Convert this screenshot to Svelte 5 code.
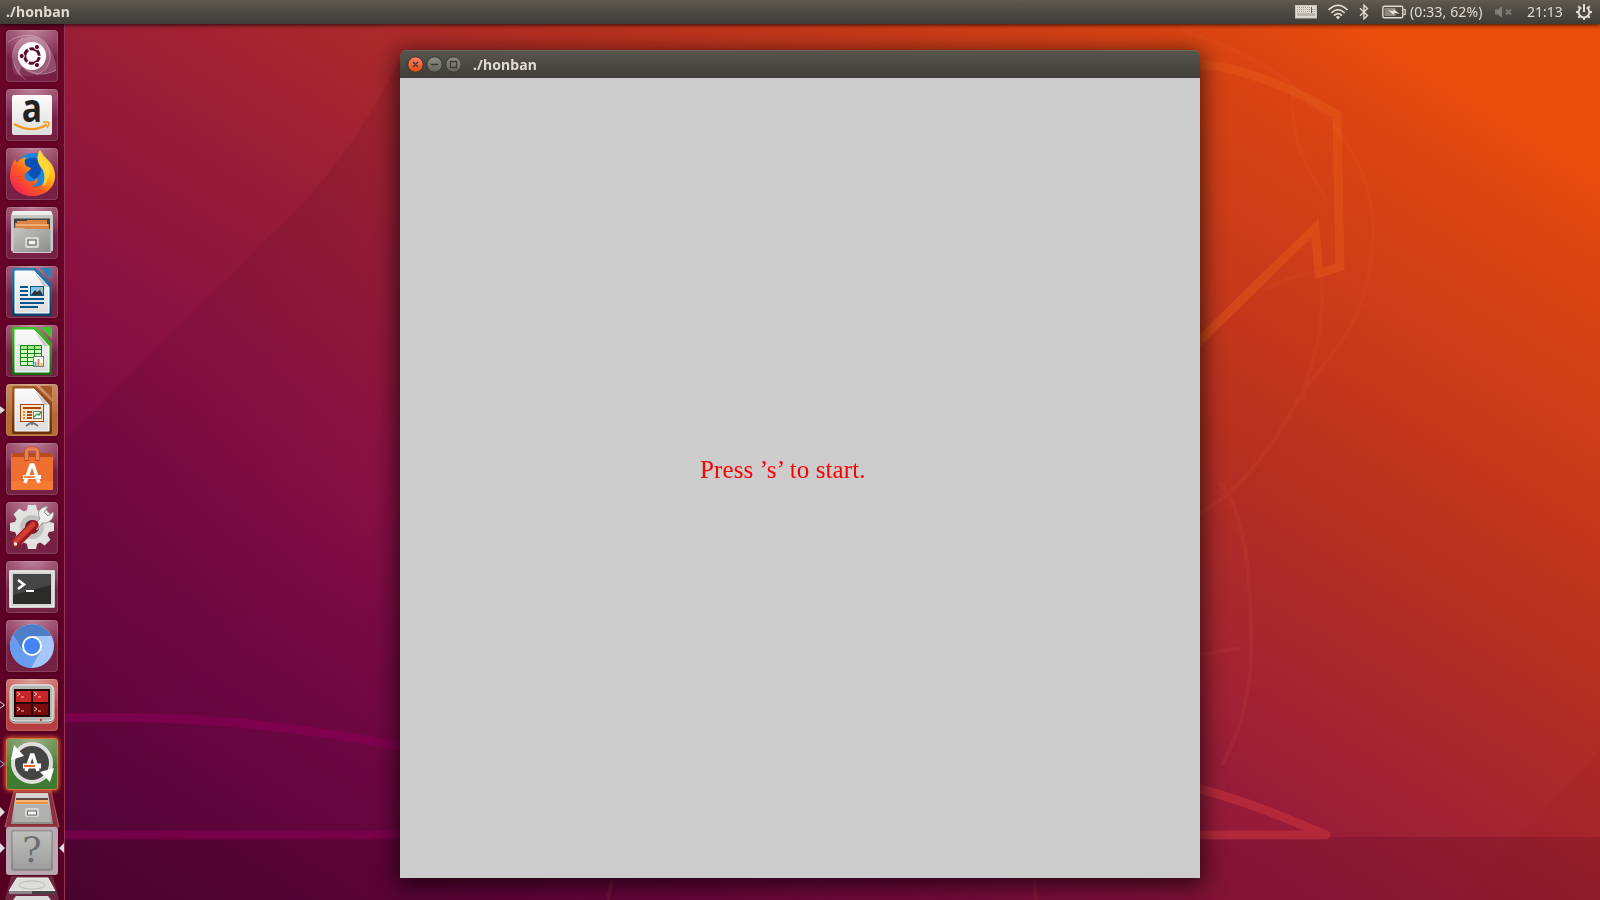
<script>
  const apps = [
    { id: 'dash' },
    { id: 'amazon' },
    { id: 'firefox' },
    { id: 'files' },
    { id: 'writer' },
    { id: 'calc' },
    { id: 'impress', tint: 'orange', arrow: 'solid' },
    { id: 'software' },
    { id: 'settings' },
    { id: 'terminal' },
    { id: 'chromium' },
    { id: 'terminator', tint: 'red', arrow: 'outline' },
    { id: 'updater', tint: 'green', arrow: 'blue' }
  ];
  const doc = {
    writer: ['#2f80b4', '#003f6b'],
    calc: ['#43c02f', '#126e0c'],
    impress: ['#a55a26', '#6d2c05']
  };
</script>

<div class="desktop">
  <svg class="wallpaper" width="1600" height="900" viewBox="0 0 1600 900">
    <defs>
      <linearGradient id="wall" gradientUnits="userSpaceOnUse" x1="-383" y1="613" x2="383" y2="-613">
        <stop offset="0" stop-color="#4b0532" />
        <stop offset=".053" stop-color="#550538" />
        <stop offset=".173" stop-color="#69063f" />
        <stop offset=".27" stop-color="#780a43" />
        <stop offset=".34" stop-color="#850f42" />
        <stop offset=".5" stop-color="#991d38" />
        <stop offset=".6" stop-color="#a8282d" />
        <stop offset=".69" stop-color="#b63020" />
        <stop offset=".83" stop-color="#cd3d18" />
        <stop offset=".93" stop-color="#dc4512" />
        <stop offset=".99" stop-color="#e94e0c" />
      </linearGradient>
      <linearGradient id="fold" gradientUnits="userSpaceOnUse" x1="200" y1="300" x2="400" y2="500">
        <stop offset="0" stop-color="#300018" stop-opacity=".09" />
        <stop offset="1" stop-color="#300018" stop-opacity="0" />
      </linearGradient>
      <filter id="soft"><feGaussianBlur stdDeviation=".7" /></filter>
    </defs>
    <rect width="1600" height="900" fill="url(#wall)" />
    <path d="M60 445L270 235Q340 175 400 60H1000V900H60Z" fill="url(#fold)" />
    <path d="M0 837H1600V900H0Z" fill="#3a0018" opacity=".17" />
    <path d="M1460 900L1600 750V900Z" fill="#8a0c10" opacity=".06" />
    <g fill="none" stroke-linejoin="round" filter="url(#soft)">
      <path d="M60 718C190 714 300 726 402 747" stroke="#860555" stroke-width="9" opacity=".7" />
      <path d="M60 835H402" stroke="#80054f" stroke-width="9" opacity=".7" />
      <path d="M1190 64C1240 64 1300 92 1337 115L1340 267L1319 273L1315 228L1190 350" stroke="#e66020" stroke-width="9" stroke-linejoin="miter" opacity=".42" />
      <path d="M1190 787C1230 795 1280 815 1326 835H1190" stroke="#c12e3c" stroke-width="9" opacity=".65" />
      <g stroke="#ed6440" stroke-width="4" opacity=".1">
        <path d="M1180 30C1300 65 1373 145 1373 230C1373 330 1320 360 1295 405C1260 470 1225 500 1190 520" />
        <path d="M1292 85C1290 150 1310 170 1326 200M1322 275C1325 340 1308 370 1302 400M1265 290Q1290 275 1320 272" />
        <path d="M1220 482C1250 520 1252 600 1251 660C1248 710 1235 740 1222 765M1200 655L1240 648" />
        <path d="M612 880L608 900M1034 880L1036 900" />
      </g>
    </g>
  </svg>

  <header class="panel">
    <span class="panel-title">./honban</span>
    <div class="indicators">
      <svg class="keyboard" width="22" height="14" viewBox="0 0 22 14">
        <rect x=".5" y=".5" width="21" height="12.5" fill="#dedbd3" stroke="#c7c4bd" />
        <path d="M2 2.5h13M2 4.5h13M2 6.5h13M17 6.5h4M17 4.5h3" stroke="#a09e97" stroke-dasharray="1 1" />
        <path d="M2 9.5h18" stroke="#bab7af" stroke-width="3" /><path d="M16.5 2v6" stroke="#5d5b55" />
      </svg>
      <svg class="wifi" width="22" height="16" viewBox="0 0 22 16" fill="none" stroke="#dfdbd2" stroke-width="1.7">
        <path d="M1.5 6Q11-3.2 20.5 6M4.3 9Q11 2.2 17.7 9M7 11.7Q11 7.5 15 11.7" /><path d="M8.8 13Q11 11 13.2 13L11 15.5Z" fill="#dfdbd2" stroke="none" />
      </svg>
      <svg class="bluetooth" width="10" height="16" viewBox="0 0 10 16" fill="none" stroke="#dfdbd2" stroke-width="1.4"><path d="M1 4.2L8.500 11.400L5 14.800V1.200L8.500 4.600L1 11.800" /></svg>
      <svg class="battery" width="24" height="14" viewBox="0 0 24 14">
        <rect x=".8" y="1.3" width="20" height="11.400" rx="1.400" fill="none" stroke="#dfdbd2" stroke-width="1.400" />
        <rect x="2.500" y="3" width="11" height="8" fill="#8c8981" /><path d="M21.500 4.500h1.700v5h-1.700" fill="none" stroke="#dfdbd2" stroke-width="1.200" />
        <path d="M6 5L11.500 6.600V4L17.500 9L12 7.700V10Z" fill="#eeeae0" />
      </svg>
      <span class="charge">(0:33, 62%)</span>
      <svg class="sound" width="18" height="14" viewBox="0 0 18 14"><path d="M0 4.500h3L7 1v12L3 9.500H0Z" fill="#817e76" /><path d="M11 4.500l5 5m0-5l-5 5" stroke="#817e76" stroke-width="1.800" /></svg>
      <span class="clock">21:13</span>
      <svg class="gear" width="18" height="18" viewBox="-9 -9 18 18" fill="none" stroke="#dfdbd2">
        <path d="M-2.800-4.600A5.400 5.400 0 1 0 2.800-4.600" stroke-width="2" /><path d="M0-8V0" stroke-width="2" />
        <path d="M-5.800 0H-8M5.800 0H8M0 5.800V8M-4.100 4.100L-5.800 5.800M4.100 4.100L5.800 5.800M-4.100-4.100L-5.800-5.800M4.100-4.100L5.800-5.800" stroke-width="2" />
      </svg>
    </div>
  </header>

  <nav class="launcher">
    {#each apps as app}
      <div class="tile {app.tint ?? ''}">
        {#if app.arrow}
          <svg class="pip" width="6" height="10" viewBox="0 0 6 10"><path d="M-1 1L4.500 5L-1 9Z" fill={app.arrow === 'solid' ? '#ddd' : 'none'} stroke={app.arrow === 'blue' ? '#7fb9e8' : '#ddd'} /></svg>
        {/if}
        <svg class="icon" width="52" height="52" viewBox="0 0 52 52">
          <defs>
            <linearGradient id={`paper-${app.id}`} x2="0" y2="1"><stop stop-color="#fbfbfb" /><stop offset="1" stop-color="#dedede" /></linearGradient>
            <linearGradient id={`steel-${app.id}`} x2="1" y2="1"><stop stop-color="#c4c4c2" /><stop offset="1" stop-color="#8b8b89" /></linearGradient>
          </defs>
          {#if app.id === 'dash'}
            <path d="M2 16Q24-4 40 12Q49 25 41 39Q28 50 8 44Q1 18 15 8L2 16Z" fill="#fff" opacity=".1" />
            <path d="M8 30C5 15 15 6 26 7C40 8 48 23 50 35V41C38 46 22 46 16 37C12 42 14 46 19 50C11 44 7 38 8 30Z" fill="#fff" opacity=".2" />
            <g fill="none" stroke="#fff" opacity=".3"><path d="M2 12C24-3 46 9 44 29C42 37 38 42 30 45" /><path d="M20 50C3 37 3 16 17 8M50 40C34 49 16 42 12 26" /></g>
            <circle cx="26" cy="26" r="14" fill="#fff" />
            <circle cx="26" cy="26" r="7.300" fill="none" stroke="#5c0c2c" stroke-width="3" stroke-dasharray="13.700 1.600" stroke-dashoffset="-1" />
            <g fill="#5c0c2c" stroke="#fff"><circle cx="15.700" cy="26" r="2.600" /><circle cx="31" cy="17" r="2.600" /><circle cx="31" cy="35" r="2.600" /></g>
          {:else if app.id === 'amazon'}
            <rect x="6" y="6" width="40" height="40" rx="2" fill={`url(#paper-${app.id})`} />
            <g transform="translate(26 33) scale(.86 1)"><text text-anchor="middle" font-family="Open Sans" font-weight="700" font-size="39" fill="#222">a</text></g>
            <path d="M8 35Q26 45 41 35.500" fill="none" stroke="#f7981d" stroke-width="2.400" /><path d="M37 33.500Q43 32 43 34Q42.500 37 41 39" fill="none" stroke="#f7981d" stroke-width="1.500" />
          {:else if app.id === 'firefox'}
            <defs><linearGradient id="ff" x1=".9" y1="0" x2=".1" y2=".9"><stop stop-color="#fff34f" /><stop offset=".38" stop-color="#ffb414" /><stop offset=".65" stop-color="#ff5b22" /><stop offset="1" stop-color="#ee2152" /></linearGradient></defs>
            <circle cx="27" cy="22" r="17" fill="#1a86dd" /><path d="M19 12Q29 7 34 13Q38 28 28 31Q18 25 19 12" fill="#0b50b5" />
            <path d="M4 26Q5 17 9 11L11 15Q14 10 20 9Q17 14 20 18L25 20Q24 23 19 25Q17 30 22 33Q28 35 31 30Q33 36 26 38Q37 41 39 30Q40 24 34 17Q29 10 34 2Q37 8 42 12Q49 19 49 28C49 40 39 48 26 48C12 48 3 38 4 26Z" fill="url(#ff)" />
            <path d="M34 2Q35 9 41 15Q47 22 41 34Q39 38 36 40Q40 31 37 22Q28 13 34 2Z" fill="#ffdc3c" opacity=".8" />
          {:else if app.id === 'files'}
            <path d="M7 4H45L47 9V44H5V9Z" fill="#c6c6c4" /><path d="M7 4H45L46.500 8H5.500Z" fill="#ededeb" /><path d="M8 11.500H44V24H8Z" fill="#444" /><path d="M11 14H21V13H41V17H43V22H9V16H11Z" fill="#df8246" /><path d="M10 18H42" stroke="#ffd8a0" />
            <path d="M7 21H18L19 22H45V46H7Z" fill={`url(#steel-${app.id})`} /><path d="M7 22V45.500H45V22" fill="none" stroke="#ccc" />
            <rect x="19" y="30" width="14" height="11" rx="2" fill="#d7d7d5" /><rect x="22" y="33" width="8" height="5" fill="#eee" stroke="#555" />
          {:else if doc[app.id]}
            <defs><linearGradient id={`doc-${app.id}`} x2="0" y2="1"><stop stop-color={doc[app.id][0]} /><stop offset="1" stop-color={doc[app.id][1]} /></linearGradient></defs>
            <path d="M8 2H30L46 18V48Q46 50 44 50H8Q6 50 6 48V4Q6 2 8 2Z" fill={`url(#doc-${app.id})`} /><path d="M34 2H44Q46 2 46 4V14Z" fill={doc[app.id][0]} />
            <path d="M9 5H28L43 21V47H9Z" fill={`url(#paper-${app.id})`} stroke="#fff" /><path d="M29 7L43 21H38Z" fill="#c8c8c8" />
            {#if app.id === 'writer'}
              <path d="M14 21H22M14 25H22M14 29H22M14 33H38M14 37H38M14 41H32" stroke="#00568d" stroke-width="2" /><rect x="24.500" y="20.500" width="13" height="9" fill="#83c5ec" stroke="#00568d" /><path d="M25 29L29 24L31 26L34 24L37 29Z" fill="#333" /><circle cx="35" cy="23" r="1" fill="#e3a720" />
            {:else if app.id === 'calc'}
              <path d="M14.500 20.500H35.500V40.500H14.500Z" fill="#d1ffc8" stroke="#128410" /><path d="M15 21h20v3H15Z" fill="#a3e888" /><path d="M14 24.500h21M14 28.500h21M14 32.500h21M14 36.500h21M21.500 20v20M28.500 20v20" stroke="#128410" /><rect x="27.500" y="31.500" width="10" height="10" fill="#fff" stroke="#777" /><path d="M29.500 41v-4" stroke="#5599d6" stroke-width="2" /><path d="M35.500 41v-3" stroke="#efbd26" stroke-width="2" /><path d="M32.500 41v-7" stroke="#e08338" stroke-width="2" />
            {:else}
              <path d="M20 42L26 38L32 42M26 37V41" fill="none" stroke="#777" stroke-width="2" /><rect x="14.500" y="20.500" width="23" height="17" fill="#ffe5cc" stroke="#a34604" /><path d="M17 24H35M21 28H26M21 31H26M21 34H26" stroke="#a94a06" stroke-width="2" /><path d="M17 28h2M17 31h2M17 34h2" stroke="#e38b4f" stroke-width="2" /><rect x="27.500" y="27.500" width="8" height="7" fill="#fff" stroke="#777" /><path d="M28 33L31 30L33 31L35 28" fill="none" stroke="#2da13d" stroke-width="1.400" />
            {/if}
          {:else if app.id === 'software'}
            <path d="M5 11L7 10H45L47 14V47H5Z" fill="#ed6e2f" /><path d="M5 14L7 10H45L47 14Z" fill="#bb4a20" /><path d="M5 38H47V47H5Z" fill="#f47931" />
            <path d="M20.500 18V9Q20.500 6 23.500 6H28.500Q31.500 6 31.500 9V18" fill="none" stroke="#b9502c" stroke-width="5" /><path d="M20.500 17V9Q20.500 6 23.500 6H28.500Q31.500 6 31.500 9V17" fill="none" stroke="#e58158" stroke-width="3.400" />
            <path d="M19 40L25 22H27L33 40" fill="none" stroke="#fff" stroke-width="3.600" /><path d="M17 34H35" stroke="#fff" stroke-width="4" /><path d="M18 34H29" stroke="#ed6e2f" stroke-width="1.600" />
          {:else if app.id === 'settings'}
            <g transform="translate(26 25)" fill="#e2e2e0">{#each [0, 45, 90, 135, 180, 225, 270, 315] as angle}<path d="M-6-13L-4-22H4L6-13Z" transform={`rotate(${angle})`} />{/each}<circle r="17.500" /><circle r="12" fill="#c2c0c0" /><circle r="7" fill="#701c37" /></g>
            <path d="M27 24L34 17Q30 10 36 6Q39 4 42 5L38 10L42 14L47 10Q49 14 44 19Q40 22 36 21L31 28Z" fill="#eee" stroke="#999" />
            <path d="M10 41L28 23" stroke="#9c1c1c" stroke-width="9.500" stroke-linecap="round" /><path d="M9.500 40L27 22.500" stroke="#d43b36" stroke-width="5" stroke-linecap="round" /><circle cx="9.500" cy="42" r="1.700" fill="#fff" />
          {:else if app.id === 'terminal'}
            <rect x="3" y="9" width="46" height="38" rx="1.500" fill={`url(#steel-${app.id})`} /><rect x="4" y="10" width="44" height="36" fill="#d5d5d3" stroke="#fafafa" /><rect x="7" y="13" width="38" height="30" fill="#2b2b2a" /><path d="M7 13H45V24L7 34Z" fill="#5b5b5b" opacity=".55" />
            <path d="M12 19L18 23.500L12 28" fill="none" stroke="#fff" stroke-width="2.600" /><path d="M20 30H28" stroke="#fff" stroke-width="2" />
          {:else if app.id === 'chromium'}
            <circle cx="26" cy="26" r="22" fill="#a5c6f8" /><path d="M7 15A22 22 0 0 1 45.500 16H26L17 31Z" fill="#4f7ec8" /><path d="M7 15A22 22 0 0 0 25 48L35 31Q25 38 17 31Z" fill="#679df0" />
            <circle cx="26" cy="26" r="10" fill="#fff" /><circle cx="26" cy="26" r="8" fill="#4385f5" />
          {:else if app.id === 'terminator'}
            <rect x="4" y="6" width="44" height="38" rx="5" fill="#6f726c" stroke="#d3d4ce" /><rect x="5" y="6" width="42" height="36" rx="4" fill="#b4b8b1" stroke="#eee" /><rect x="8" y="10" width="36" height="28" fill="#260606" />
            <path d="M10 12H25V23H10ZM27 12H42V23H27Z" fill="#c72527" /><path d="M10 25H25V36H10ZM27 25H42V36H27Z" fill="#790b0d" />
            <path d="M11 13L14 15L11 17M15 18H18M28 13L31 15L28 17M32 18H35M11 28L14 30L11 32M15 32H18M28 28L31 30L28 32M32 32H35" fill="none" stroke="#fbb" /><circle cx="35" cy="41" r="1.200" fill="#f02c2c" />
          {:else}
            <circle cx="26" cy="25" r="19" fill="#454545" stroke="#dededc" stroke-width="4" /><path d="M5 22L8 7L18 18Z" fill="#fff" /><path d="M34 34L48 30L44 44Z" fill="#fff" />
            <path d="M20 33L25.500 17H27L32 33" fill="none" stroke="#fff" stroke-width="3.500" /><path d="M17 28H35" stroke="#fff" stroke-width="5" /><path d="M18 28H29" stroke="#eb662d" stroke-width="2" />
          {/if}
        </svg>
      </div>
    {/each}
    <svg class="stack" width="64" height="110" viewBox="0 0 64 110">
      <defs><linearGradient id="metal" x2="0" y2="1"><stop stop-color="#dededc" /><stop offset="1" stop-color="#8c8c8a" /></linearGradient></defs>
      <path d="M14 1H51L59 37H5Z" fill="#8d303c" stroke="#ac5961" />
      <path d="M16 3H48L53 34H11Z" fill="url(#metal)" /><path d="M16 8H48V14H16Z" fill="#5e4a41" /><path d="M16 10H48V14H16Z" fill="#ed9243" /><path d="M16 11H48" stroke="#ffd6a3" />
      <path d="M15 15H49L51 32H13Z" fill="#b0b0ae" /><rect x="25" y="18" width="14" height="9" rx="1.500" fill="#d5d5d3" /><rect x="27.500" y="21" width="9" height="4" fill="#f5f5f5" stroke="#666" />
      <rect x="6" y="37" width="52" height="48" rx="3" fill="#b8a8b0" /><rect x="12" y="41" width="40" height="39" rx="1" fill="url(#metal)" stroke="#777" /><rect x="13" y="42" width="38" height="37" fill="#aaa" opacity=".6" />
      <text x="32" y="72" text-anchor="middle" font-family="DejaVu Serif" font-size="36" fill="#6c6c6c">?</text>
      <path d="M11 86H53L59 110H5Z" fill="#7b3650" opacity=".7" /><path d="M17 88H48L55 101H9Z" fill="#dededc" stroke="#f5f5f4" /><ellipse cx="32" cy="95" rx="13" ry="4" fill="none" stroke="#bbb" /><path d="M9 101H55V104H9Z" fill="#444" /><path d="M9 104H32V101H9Z" fill="#888" /><path d="M16 106H48L51 110H13Z" fill="#d8d8d8" />
      <path d="M0 17L5 22L0 27ZM0 53L5 58L0 63ZM64 53L59 58L64 63Z" fill="#ddd" />
    </svg>
  </nav>

  <main class="window">
    <div class="titlebar">
      <svg width="54" height="18" viewBox="0 0 54 18">
        <defs><linearGradient id="close" x2="0" y2="1"><stop stop-color="#fb8065" /><stop offset="1" stop-color="#e84b13" /></linearGradient><linearGradient id="btn" x2="0" y2="1"><stop stop-color="#918e85" /><stop offset="1" stop-color="#66645e" /></linearGradient></defs>
        <g stroke="#35342f"><circle cx="8.500" cy="8.500" r="7.700" fill="url(#close)" /><circle cx="27.500" cy="8.500" r="7.700" fill="url(#btn)" /><circle cx="46.500" cy="8.500" r="7.700" fill="url(#btn)" /></g>
        <path d="M6 6L11 11M11 6L6 11M24 8.500H31M43.500 5.500H49.500V11.500H43.500Z" fill="none" stroke="#3c3934" stroke-width="1.300" />
      </svg>
      <span>./honban</span>
    </div>
    <div class="canvas"><p>Press ’s’ to start.</p></div>
  </main>
</div>

<style>
  :global(body) { margin: 0; overflow: hidden; }
  .desktop { position: relative; width: 1600px; height: 900px; overflow: hidden; font-family: "Noto Sans", sans-serif; }
  svg { display: block; flex: none; }
  .wallpaper { position: absolute; inset: 0; }
  .panel { position: relative; z-index: 3; box-sizing: border-box; height: 24px; padding: 0 7px 0 6px; display: flex; align-items: center; justify-content: space-between; background: linear-gradient(#5f5d52, #55534a 20%, #3e3d38); color: #dfdbd2; box-shadow: 0 1px 4px rgba(0, 0, 0, .8); font-size: 14px; line-height: 24px; }
  .panel-title, .titlebar span { font-size: 14px; font-weight: 700; letter-spacing: .1px; }
  .indicators { display: flex; align-items: center; }
  .wifi { margin-left: 10px; }
  .bluetooth { margin-left: 10px; }
  .battery { margin-left: 13px; }
  .charge { width: 73px; margin-left: 4px; white-space: nowrap; letter-spacing: .12px; }
  .sound { margin-left: 12px; }
  .clock { width: 37px; margin-left: 14px; }
  .gear { margin-left: 11px; }
  .launcher { position: relative; box-sizing: border-box; width: 65px; height: 876px; padding-top: 6px; border-right: 1px solid #963657; background: linear-gradient(#690526, #65022a 50%, #550020); display: flex; flex-direction: column; gap: 7px; }
  .tile { position: relative; flex: none; box-sizing: border-box; width: 52px; height: 52px; margin-left: 6px; border-radius: 4px; background: radial-gradient(ellipse 50px 32px at 50% 0, #bd8299 0, #9c4f6d 50%, #762044 100%); box-shadow: inset 0 0 0 1px rgba(255, 255, 255, .14), 0 0 3px rgba(20, 0, 10, .4); }
  .icon { overflow: visible; }
  .orange { background: radial-gradient(ellipse 50px 34px at 50% 0, #d4a181, #b46c35); }
  .red { background: radial-gradient(ellipse 50px 34px at 50% 0, #dda09a, #b83f40); }
  .green { background: radial-gradient(ellipse 50px 34px at 50% 0, #a3b18a, #407b32); box-shadow: inset 0 0 0 1px #d17742, 0 0 4px 1px #e85c30; }
  .pip { position: absolute; left: -6px; top: 21px; }
  .stack { margin-top: -7px; }
  .window { position: absolute; left: 400px; top: 50px; width: 800px; height: 828px; border-radius: 6px 6px 0 0; box-shadow: 0 5px 22px 3px rgba(0, 0, 0, .65); }
  .titlebar { box-sizing: border-box; height: 28px; padding-left: 7px; border-radius: 6px 6px 0 0; border-top: 1px solid #69675d; display: flex; align-items: center; gap: 12px; background: linear-gradient(#57554c, #3e3d38); color: #dfdbd2; }
  .canvas { display: flex; align-items: center; height: 800px; background: #ccc; }
  .canvas p { margin: 0 0 17px 300px; font: 25px/30px "Liberation Serif", serif; letter-spacing: .12px; color: #f00; white-space: nowrap; }
</style>
